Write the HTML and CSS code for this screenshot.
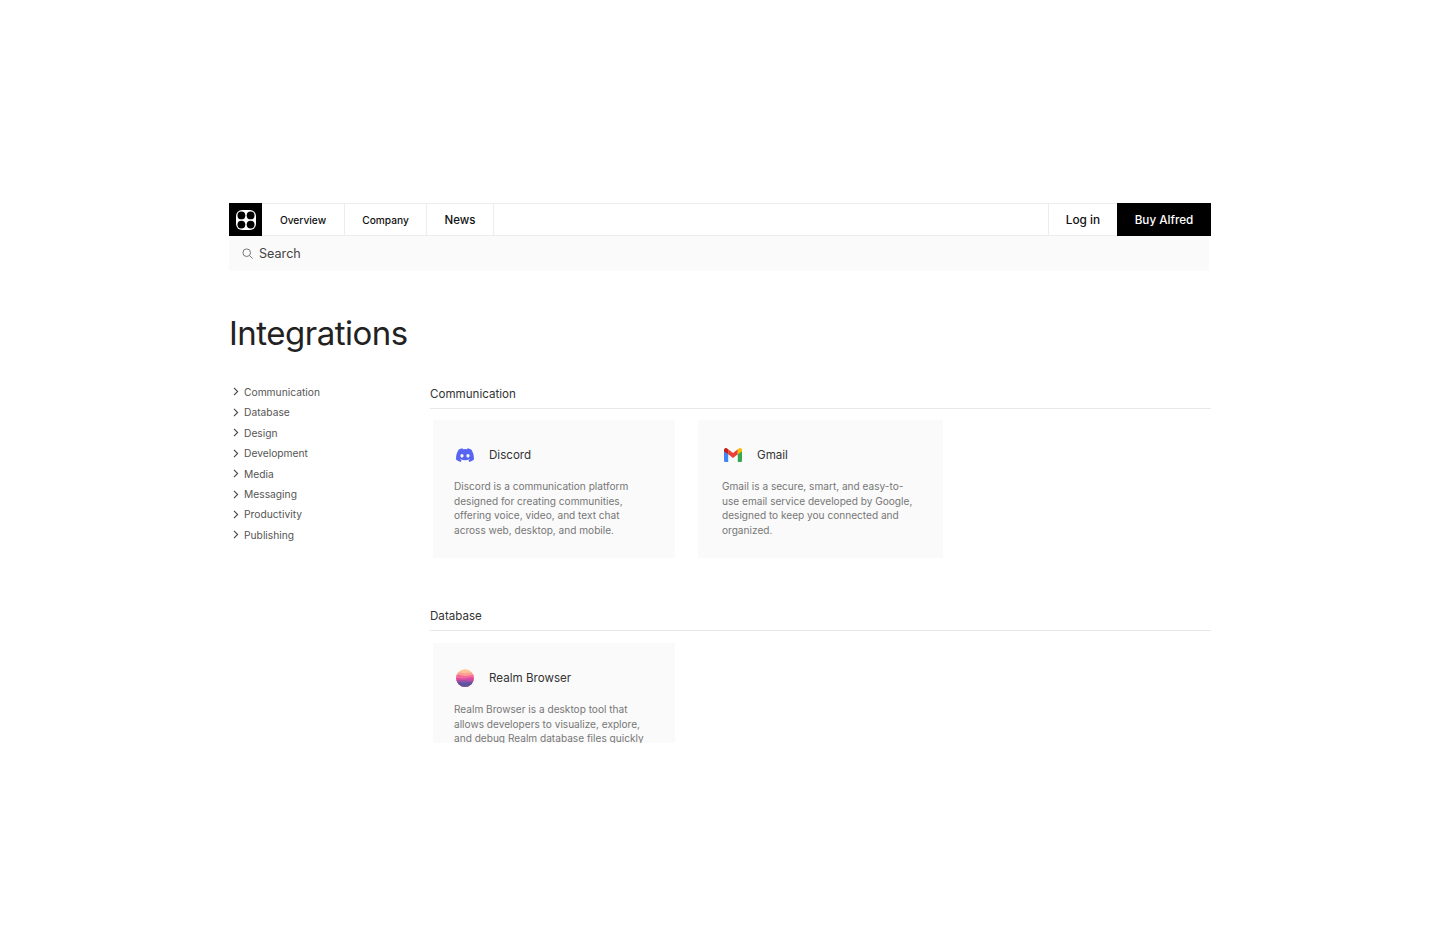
FILE: index.html
```html
<!DOCTYPE html>
<html lang="en">
<head>
<meta charset="utf-8">
<title>Integrations</title>
<link rel="stylesheet" href="styles.css">
</head>
<body>
<div class="page">
  <header class="topbar">
    <a class="logo" href="#"><svg width="20" height="20" viewBox="0 0 20 20"><rect width="20" height="20" rx="6" fill="#fff"/><circle cx="5.400" cy="5.400" r="3.900" fill="#000"/><circle cx="14.600" cy="5.400" r="3.900" fill="#000"/><circle cx="5.400" cy="14.600" r="3.900" fill="#000"/><circle cx="14.600" cy="14.600" r="3.900" fill="#000"/></svg></a>
    <nav class="nav">
      <a class="nav-item nav-overview" href="#">Overview</a>
      <a class="nav-item nav-company" href="#">Company</a>
      <a class="nav-item nav-news" href="#">News</a>
    </nav>
    <div class="actions">
      <a class="login" href="#">Log in</a>
      <a class="buy" href="#">Buy Alfred</a>
    </div>
  </header>
  <div class="search">
    <svg width="11" height="11" viewBox="0 0 11 11" fill="none" stroke="#777" stroke-width="1"><circle cx="4.700" cy="4.700" r="3.800"/><path d="M7.500 7.500l3 3"/></svg>
    <span>Search</span>
  </div>
  <h1 class="title">Integrations</h1>
  <div class="columns">
    <ul class="side">
      <li><svg class="chev" width="6" height="9" viewBox="0 0 6 9"><path d="M1 .8l3.600 3.700L1 8.200"/></svg>Communication</li>
      <li><svg class="chev" width="6" height="9" viewBox="0 0 6 9"><path d="M1 .8l3.600 3.700L1 8.200"/></svg>Database</li>
      <li><svg class="chev" width="6" height="9" viewBox="0 0 6 9"><path d="M1 .8l3.600 3.700L1 8.200"/></svg>Design</li>
      <li><svg class="chev" width="6" height="9" viewBox="0 0 6 9"><path d="M1 .8l3.600 3.700L1 8.200"/></svg>Development</li>
      <li><svg class="chev" width="6" height="9" viewBox="0 0 6 9"><path d="M1 .8l3.600 3.700L1 8.200"/></svg>Media</li>
      <li><svg class="chev" width="6" height="9" viewBox="0 0 6 9"><path d="M1 .8l3.600 3.700L1 8.200"/></svg>Messaging</li>
      <li><svg class="chev" width="6" height="9" viewBox="0 0 6 9"><path d="M1 .8l3.600 3.700L1 8.200"/></svg>Productivity</li>
      <li><svg class="chev" width="6" height="9" viewBox="0 0 6 9"><path d="M1 .8l3.600 3.700L1 8.200"/></svg>Publishing</li>
    </ul>
    <main class="content">
      <section class="group">
        <h2 class="group-title">Communication</h2>
        <div class="cards">
          <article class="card">
            <div class="card-head">
              <svg class="icon" width="18" height="14" viewBox="0 0 24 18"><path fill="#5865f2" d="M20.300 1.500A19.600 19.600 0 0 0 15.400 0c-.2.4-.5 1-.6 1.300a18.300 18.300 0 0 0-5.600 0C9.100 1 8.800.4 8.600 0a19.600 19.600 0 0 0-4.900 1.500C.6 6.200-.3 10.700.2 15.200a19.800 19.800 0 0 0 6 3c.5-.7.900-1.400 1.300-2.100-.7-.3-1.400-.6-2-1l.5-.4a14.100 14.100 0 0 0 12 0l.5.400c-.6.400-1.300.7-2 1 .4.700.8 1.400 1.300 2.100a19.700 19.700 0 0 0 6-3c.5-5.200-.9-9.700-3.500-13.700zM8 12.400c-1.200 0-2.100-1.100-2.100-2.400S6.800 7.600 8 7.600s2.200 1.100 2.100 2.400c0 1.300-.9 2.400-2.100 2.400zm8 0c-1.200 0-2.100-1.100-2.100-2.400s.9-2.400 2.100-2.400 2.200 1.100 2.100 2.400c0 1.300-.9 2.400-2.100 2.400z"/></svg>
              <h3 class="card-name">Discord</h3>
            </div>
            <p class="card-text">Discord is a communication platform designed for creating communities, offering voice, video, and text chat across web, desktop, and mobile.</p>
          </article>
          <article class="card card-wide">
            <div class="card-head">
              <svg class="icon" width="18" height="14" viewBox="0 0 18 14"><path fill="#4285f4" d="M0 2v10.700C0 13.400.6 14 1.300 14h2.900V6.300L0 2z"/><path fill="#34a853" d="M13.800 14h2.900c.7 0 1.300-.6 1.300-1.300V2l-4.200 4.300V14z"/><path fill="#ea4335" d="M4.200 6.300V1.200L9 5l4.800-3.800v5.100L9 10 4.200 6.300z"/><path fill="#c5221f" d="M0 2.100v1.300l4.200 2.900V1.200L2.700.2C1.500-.5 0 .5 0 2.100z"/><path fill="#fbbc04" d="M13.800 1.200v5.100L18 3.400V2.100C18 .5 16.500-.5 15.300.2l-1.500 1z"/></svg>
              <h3 class="card-name">Gmail</h3>
            </div>
            <p class="card-text">Gmail is a secure, smart, and easy-to-use email service developed by Google, designed to keep you connected and organized.</p>
          </article>
        </div>
      </section>
      <section class="group group-db">
        <h2 class="group-title">Database</h2>
        <div class="cards">
          <article class="card">
            <div class="card-head">
              <svg class="icon" width="18" height="18" viewBox="0 0 18 18"><defs><clipPath id="realm"><circle cx="9" cy="9" r="8.800"/></clipPath></defs><g clip-path="url(#realm)"><rect width="18" height="18" fill="#fcc397"/><path fill="#fc9f95" d="M0 3.500c4-1 7 1 10 .6s5-.8 8-.4V18H0z"/><path fill="#f7699b" d="M0 6c4-1 7 1.300 10 1s5-1.300 8-.8V18H0z"/><path fill="#d34ca3" d="M0 8.800c4 .6 7 .9 10 .4s5-.9 8-.2V18H0z"/><path fill="#9a50a5" d="M0 11c4 .9 7-.2 10 .2s5 .8 8 0V18H0z"/><path fill="#59569e" d="M0 13c4-.5 7 1.100 10 .6s5-1 8-.2V18H0z"/></g></svg>
              <h3 class="card-name">Realm Browser</h3>
            </div>
            <p class="card-text">Realm Browser is a desktop tool that allows developers to visualize, explore, and debug Realm database files quickly and easily on your machine.</p>
          </article>
        </div>
      </section>
    </main>
  </div>
</div>
</body>
</html>
```
FILE: styles.css
```css
* { box-sizing: border-box; }
html, body { margin: 0; padding: 0; background: #fff; }
body { font-family: Inter, "Liberation Sans", sans-serif; color: #222; padding-top: 203px; }
a { color: inherit; text-decoration: none; }
.page { width: 982px; height: 540px; margin-left: 229px; overflow: hidden; }

.topbar { display: flex; height: 33px; border-top: 1px solid #ededed; border-bottom: 1px solid #ededed; }
.logo { width: 33px; margin: -1px 0; background: #000; display: flex; align-items: center; justify-content: center; flex: none; }
.nav { display: flex; }
.nav-item { display: flex; align-items: center; justify-content: center; border-right: 1px solid #ededed; color: #111; font-weight: 500; }
.nav-overview { width: 83px; font-size: 10.200px; }
.nav-company { width: 82px; font-size: 10.200px; }
.nav-news { width: 67px; font-size: 11.500px; }
.actions { margin-left: auto; display: flex; }
.login { width: 69px; display: flex; align-items: center; justify-content: center; border-left: 1px solid #ededed; font-size: 11.800px; font-weight: 500; color: #111; }
.buy { width: 94px; margin: -1px 0; display: flex; align-items: center; justify-content: center; background: #000; color: #fff; font-size: 11.700px; font-weight: 500; }

.search { height: 35px; background: #fafafa; display: flex; align-items: center; gap: 6px; padding-left: 13px; font-size: 12.600px; color: #444; margin-right: 2px; }

.title { margin: 42px 0 0; font-size: 33px; line-height: 40px; font-weight: 400; letter-spacing: -0.5px; color: #222; }

.columns { display: flex; margin-top: 29px; }
.side { list-style: none; margin: -0.4px 0 0; padding: 0; width: 201px; flex: none; }
.side li { display: flex; align-items: center; gap: 5px; height: 20.450px; padding-left: 4px; font-size: 10.250px; color: #555; }
.chev { flex: none; fill: none; stroke: #444; stroke-width: 1.100; }

.content { flex: 1; }
.group-title { margin: 0; height: 27px; padding-top: 3px; line-height: 18px; font-size: 11.600px; font-weight: 400; color: #333; border-bottom: 1px solid #e8e8e8; }
.group-db { margin-top: 46px; }
.cards { display: flex; gap: 23px; padding: 11px 2px 0 3px; }
.group-db .cards { padding-top: 12px; }
.card { width: 242px; height: 138px; background: #fafafa; padding: 24px 21px 0; }
.card-wide { width: 245px; padding-left: 24px; padding-right: 26px; }
.card-head { display: flex; align-items: center; gap: 15px; height: 22px; padding-left: 2px; }
.icon { flex: none; }
.card-name { margin: 0; font-size: 11.600px; font-weight: 400; color: #333; }
.card-text { margin: 13px 0 0; font-size: 10.100px; line-height: 14.500px; color: #777; }
```
